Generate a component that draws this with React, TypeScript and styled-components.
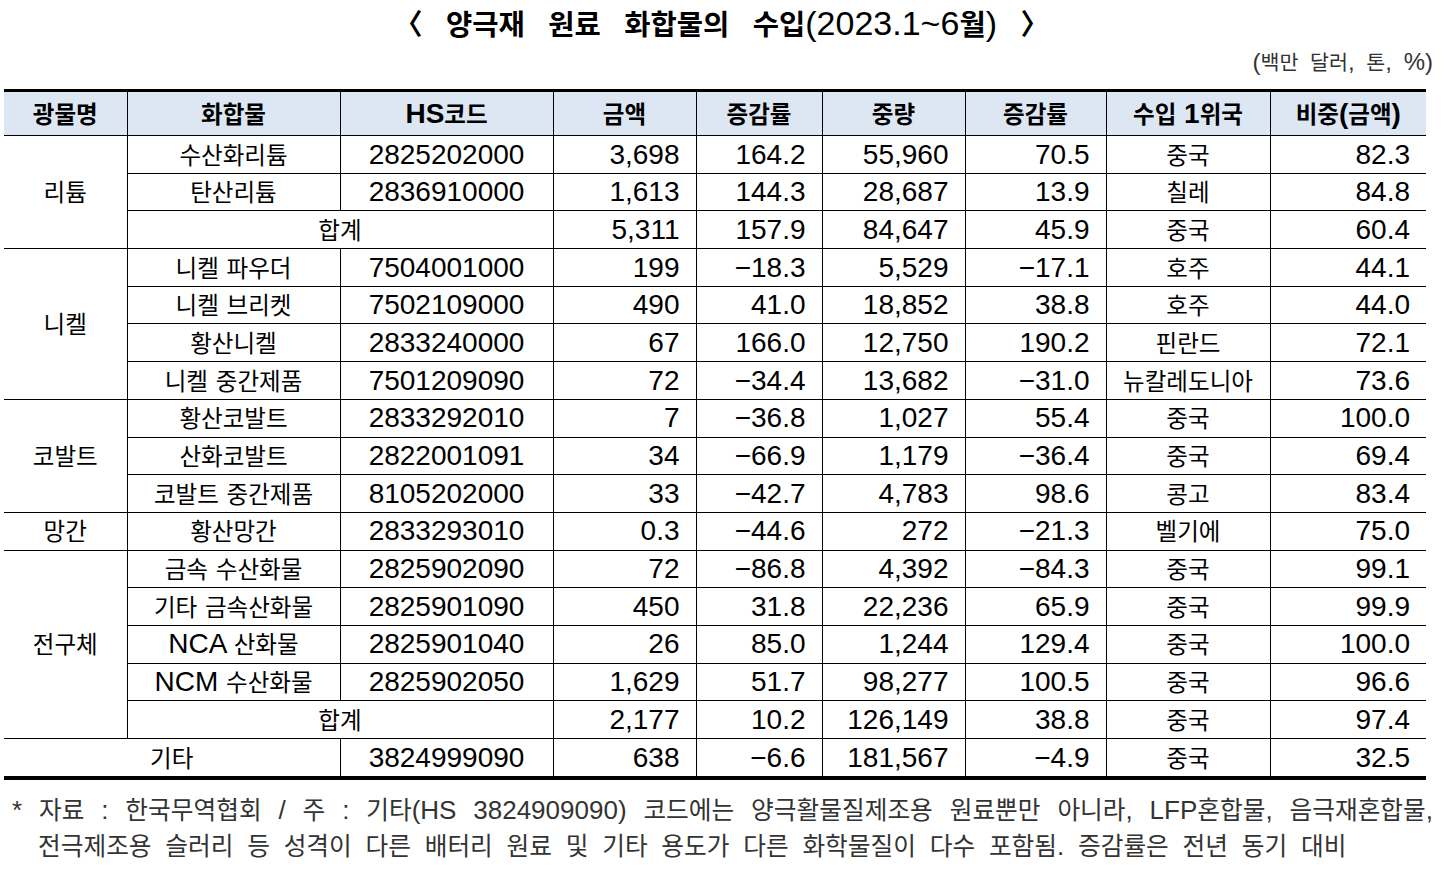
import React from "react";
import styled, { createGlobalStyle } from "styled-components";

const GlobalStyle = createGlobalStyle`
  html, body { margin: 0; padding: 0; background: #fff; }
  body {
    font-family: "Liberation Sans", "Noto Sans CJK KR", sans-serif;
    color: #000;
  }
`;

const Page = styled.div`
  width: 1443px;
  height: 872px;
  overflow: hidden;
`;

const Ko = styled.span`
  font-family: "Noto Sans CJK KR", sans-serif;
  font-size: 0.84em;
`;

const Title = styled.h1`
  margin: 0;
  height: 46px;
  line-height: 46px;
  text-align: center;
  font-size: 34px;
  font-weight: 400;
  word-spacing: 14px;
  ${Ko} {
    font-weight: 700;
  }
`;

const Units = styled.div`
  height: 30px;
  line-height: 30px;
  text-align: right;
  padding-right: 10px;
  font-size: 24px;
  color: #333;
  word-spacing: 5px;
  ${Ko} {
    font-size: 0.86em;
  }
`;

const Table = styled.table`
  margin: 13px 0 0 4px;
  width: 1422px;
  table-layout: fixed;
  border-collapse: collapse;
  border-top: 3px solid #000;
  border-bottom: 4px solid #000;
  border-left: hidden;
  border-right: hidden;
  font-size: 28px;
`;

const Col = styled.col<{ $w: number }>`
  width: ${(p) => p.$w}px;
`;

const Th = styled.th`
  height: 43px;
  padding: 0;
  background: #dde7f3;
  border: 1px solid #000;
  font-weight: 700;
  text-align: center;
  line-height: 1.2;
`;

const Td = styled.td<{ $right?: boolean }>`
  height: 36.7px;
  padding: 0 ${(p) => (p.$right ? "16px" : "0")} 0 0;
  border: 1px solid #000;
  text-align: ${(p) => (p.$right ? "right" : "center")};
  line-height: 1.2;
  white-space: nowrap;
`;

const Footer = styled.div`
  margin-top: 11px;
  padding: 0 10px 0 12px;
  font-size: 26px;
  line-height: 34px;
  color: #333;
  ${Ko} {
    font-size: 0.95em;
  }
`;

const FootFirst = styled.div`
  text-align: justify;
  text-align-last: justify;
`;

const FootRest = styled.div`
  padding-left: 26px;
  word-spacing: 6.5px;
`;

const HANGUL = /([\u3008\u3009\u1100-\u11FF\u3130-\u318F\uAC00-\uD7AF]+)/;

function K({ t }: { t: string }) {
  const parts = t.split(HANGUL);
  return (
    <>
      {parts.map((p, i) => (i % 2 === 1 ? <Ko key={i}>{p}</Ko> : p))}
    </>
  );
}

type Row = {
  group?: { name: string; span: number };
  name?: string;
  total?: boolean;
  etc?: boolean;
  code?: string;
  v: [string, string, string, string, string, string];
};

const M = "\u2212";

const rows: Row[] = [
  { group: { name: "리튬", span: 3 }, name: "수산화리튬", code: "2825202000", v: ["3,698", "164.2", "55,960", "70.5", "중국", "82.3"] },
  { name: "탄산리튬", code: "2836910000", v: ["1,613", "144.3", "28,687", "13.9", "칠레", "84.8"] },
  { total: true, v: ["5,311", "157.9", "84,647", "45.9", "중국", "60.4"] },
  { group: { name: "니켈", span: 4 }, name: "니켈 파우더", code: "7504001000", v: ["199", `${M}18.3`, "5,529", `${M}17.1`, "호주", "44.1"] },
  { name: "니켈 브리켓", code: "7502109000", v: ["490", "41.0", "18,852", "38.8", "호주", "44.0"] },
  { name: "황산니켈", code: "2833240000", v: ["67", "166.0", "12,750", "190.2", "핀란드", "72.1"] },
  { name: "니켈 중간제품", code: "7501209090", v: ["72", `${M}34.4`, "13,682", `${M}31.0`, "뉴칼레도니아", "73.6"] },
  { group: { name: "코발트", span: 3 }, name: "황산코발트", code: "2833292010", v: ["7", `${M}36.8`, "1,027", "55.4", "중국", "100.0"] },
  { name: "산화코발트", code: "2822001091", v: ["34", `${M}66.9`, "1,179", `${M}36.4`, "중국", "69.4"] },
  { name: "코발트 중간제품", code: "8105202000", v: ["33", `${M}42.7`, "4,783", "98.6", "콩고", "83.4"] },
  { group: { name: "망간", span: 1 }, name: "황산망간", code: "2833293010", v: ["0.3", `${M}44.6`, "272", `${M}21.3`, "벨기에", "75.0"] },
  { group: { name: "전구체", span: 5 }, name: "금속 수산화물", code: "2825902090", v: ["72", `${M}86.8`, "4,392", `${M}84.3`, "중국", "99.1"] },
  { name: "기타 금속산화물", code: "2825901090", v: ["450", "31.8", "22,236", "65.9", "중국", "99.9"] },
  { name: "NCA 산화물", code: "2825901040", v: ["26", "85.0", "1,244", "129.4", "중국", "100.0"] },
  { name: "NCM 수산화물", code: "2825902050", v: ["1,629", "51.7", "98,277", "100.5", "중국", "96.6"] },
  { total: true, v: ["2,177", "10.2", "126,149", "38.8", "중국", "97.4"] },
  { etc: true, code: "3824999090", v: ["638", `${M}6.6`, "181,567", `${M}4.9`, "중국", "32.5"] },
];

const widths = [123, 213, 213, 143, 126, 143, 141, 164, 156];
const heads = ["광물명", "화합물", "HS코드", "금액", "증감률", "중량", "증감률", "수입 1위국", "비중(금액)"];

export default function App() {
  return (
    <Page>
      <GlobalStyle />
      <Title>
        <K t="〈 양극재 원료 화합물의 수입(2023.1~6월) 〉" />
      </Title>
      <Units>
        <K t="(백만 달러, 톤, %)" />
      </Units>
      <Table>
        <colgroup>
          {widths.map((w, i) => (
            <Col key={i} $w={w} />
          ))}
        </colgroup>
        <thead>
          <tr>
            {heads.map((h, i) => (
              <Th key={i}>
                <K t={h} />
              </Th>
            ))}
          </tr>
        </thead>
        <tbody>
          {rows.map((r, i) => (
            <tr key={i}>
              {r.group && (
                <Td rowSpan={r.group.span}>
                  <K t={r.group.name} />
                </Td>
              )}
              {r.total && (
                <Td colSpan={2}>
                  <K t="합계" />
                </Td>
              )}
              {r.etc && (
                <>
                  <Td colSpan={2}>
                    <K t="기타" />
                  </Td>
                  <Td>{r.code}</Td>
                </>
              )}
              {!r.total && !r.etc && (
                <>
                  <Td>
                    <K t={r.name || ""} />
                  </Td>
                  <Td>{r.code}</Td>
                </>
              )}
              <Td $right>{r.v[0]}</Td>
              <Td $right>{r.v[1]}</Td>
              <Td $right>{r.v[2]}</Td>
              <Td $right>{r.v[3]}</Td>
              <Td>
                <K t={r.v[4]} />
              </Td>
              <Td $right>{r.v[5]}</Td>
            </tr>
          ))}
        </tbody>
      </Table>
      <Footer>
        <FootFirst>
          <K t="* 자료 : 한국무역협회 / 주 : 기타(HS 3824909090) 코드에는 양극활물질제조용 원료뿐만 아니라, LFP혼합물, 음극재혼합물," />
        </FootFirst>
        <FootRest>
          <K t="전극제조용 슬러리 등 성격이 다른 배터리 원료 및 기타 용도가 다른 화학물질이 다수 포함됨. 증감률은 전년 동기 대비" />
        </FootRest>
      </Footer>
    </Page>
  );
}
